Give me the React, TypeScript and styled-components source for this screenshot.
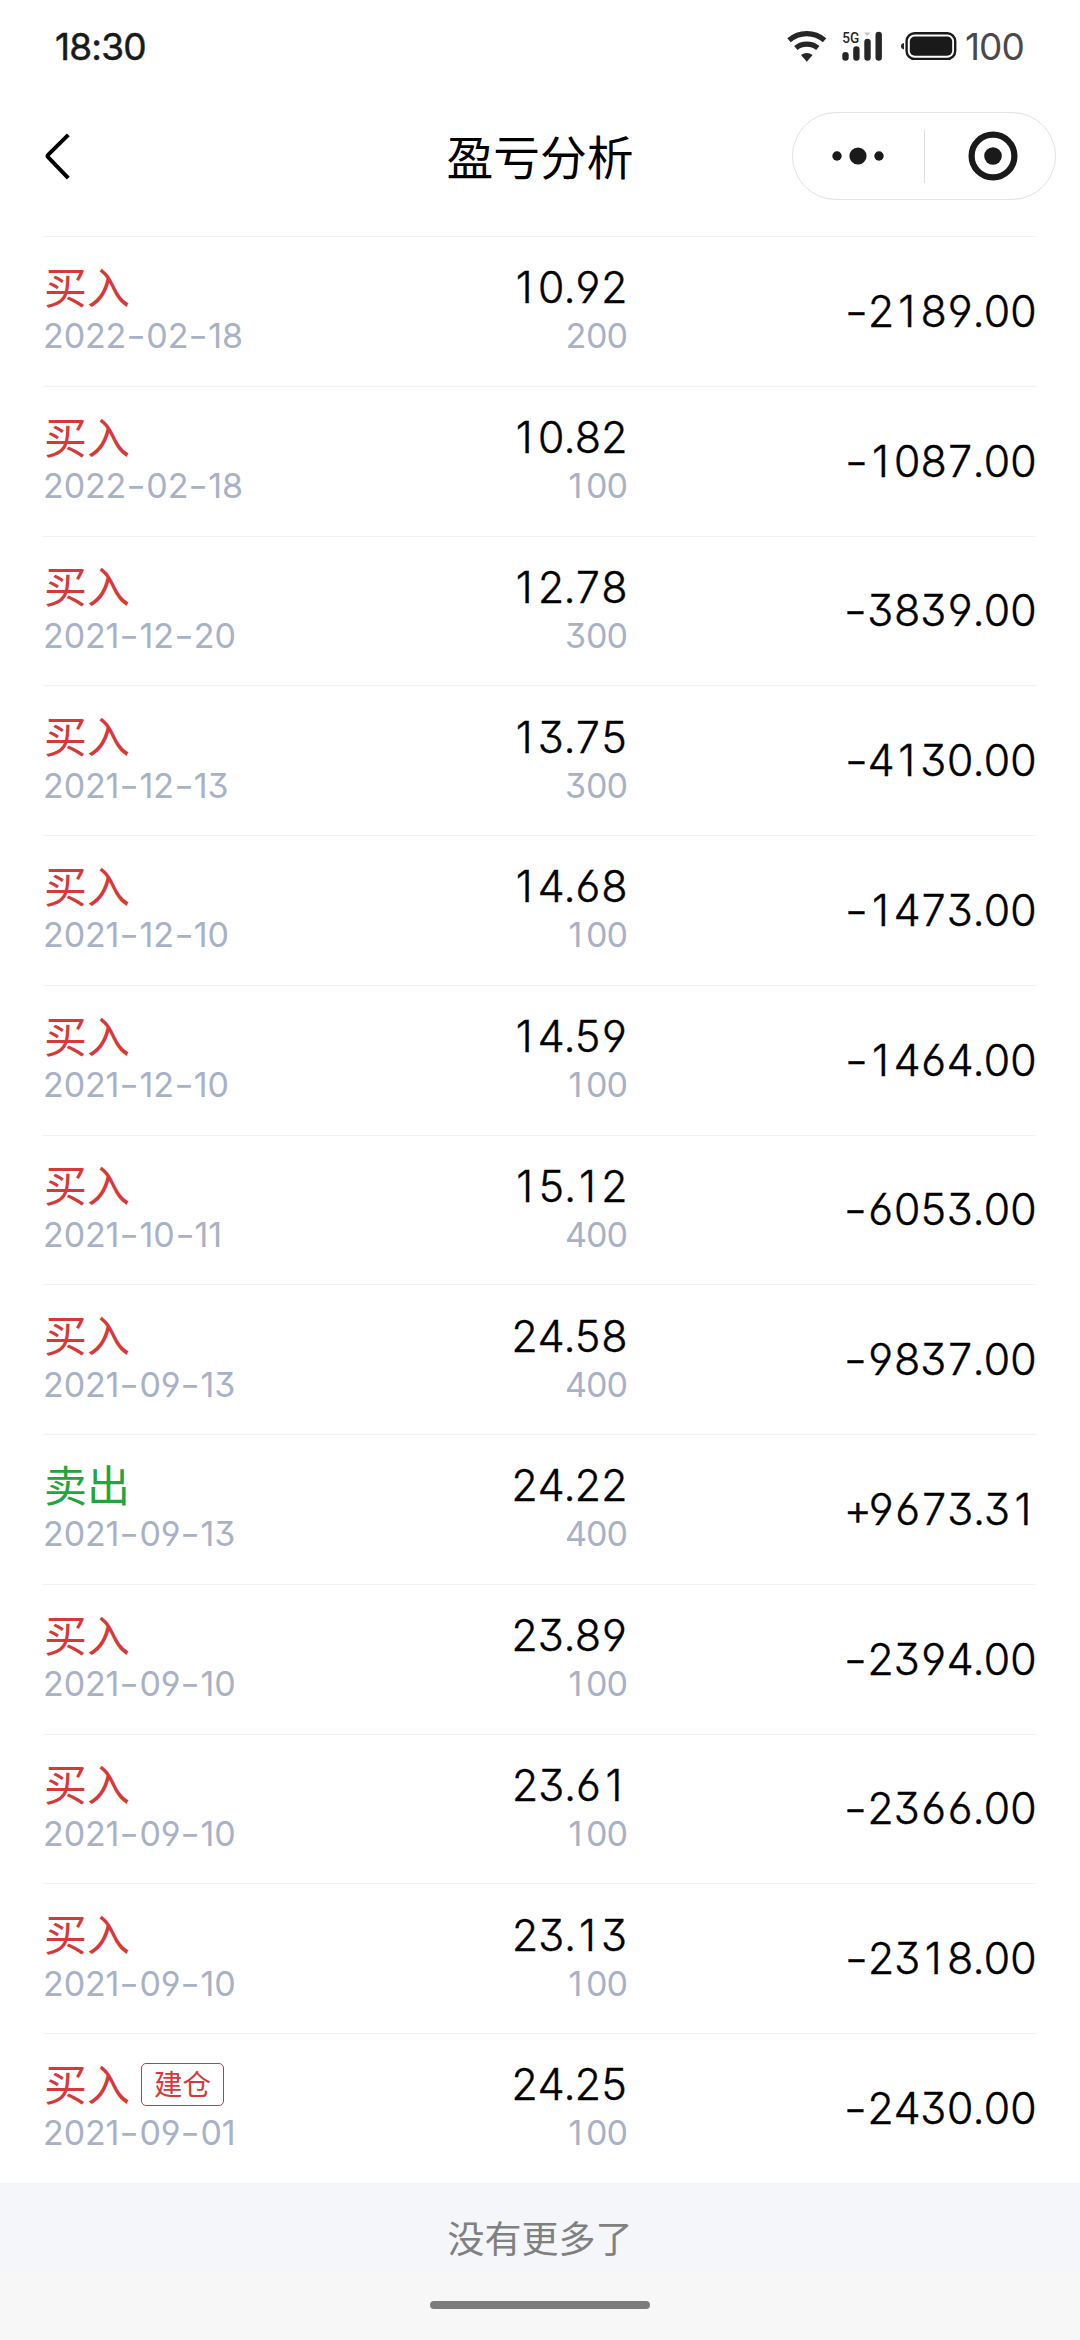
import React from "react";
import styled, { createGlobalStyle } from "styled-components";

const GlobalStyle = createGlobalStyle`
  body {
    margin: 0;
    background: #fff;
  }
`;

const cjk = `"Noto Sans CJK SC", sans-serif`;
const digits = `Inter, "Noto Sans CJK SC", sans-serif`;

const Screen = styled.div`
  width: 1080px;
  height: 2340px;
  display: flex;
  flex-direction: column;
  overflow: hidden;
  background: #fff;
  font-family: ${cjk};
`;

const StatusBar = styled.div`
  height: 94px;
  flex: none;
  box-sizing: border-box;
  padding: 0 56px 0 55px;
  display: flex;
  align-items: center;
  justify-content: space-between;
`;

const Clock = styled.span`
  font: 400 37px/46px ${digits};
  font-feature-settings: "cv04";
  letter-spacing: -0.8px;
  -webkit-text-stroke: 0.5px currentColor;
  color: #1a1a1a;
`;

const Indicators = styled.div`
  display: flex;
  align-items: center;
  gap: 8px;
`;

const BatteryLevel = styled.span`
  font: 400 37px/46px ${digits};
  letter-spacing: -0.9px;
  color: #4a4a4a;
`;

const NavBar = styled.header`
  height: 142px;
  flex: none;
  box-sizing: border-box;
  padding: 18px 24px 36px 44px;
  display: grid;
  grid-template-columns: 1fr auto 1fr;
  align-items: center;
`;

const BackButton = styled.button`
  width: 28px;
  height: 52px;
  padding: 0;
  border: 0;
  background: none;
  display: flex;
`;

const Title = styled.h1`
  margin: 0;
  padding: 0 20px 3px 0;
  font: 400 46.8px/56px ${cjk};
  color: #000;
`;

const Capsule = styled.div`
  justify-self: end;
  width: 264px;
  height: 88px;
  box-sizing: border-box;
  border: 1px solid #e3e3e3;
  border-radius: 44px;
  display: grid;
  grid-template-columns: 1fr 1px 1fr;
  align-items: center;
  justify-items: center;
`;

const CapsuleDivider = styled.div`
  width: 1px;
  height: 53px;
  background: #dedede;
`;

const CapsuleClose = styled.div`
  display: flex;
  padding-left: 6px;
`;

const List = styled.ul`
  margin: 0;
  padding: 0 44px 0 43px;
  list-style: none;
  flex: none;
`;

const Row = styled.li`
  height: 149.75px;
  box-sizing: border-box;
  border-top: 1px solid #f2f2f2;
  display: grid;
  grid-template-columns: 292px 292px 1fr;
  align-items: center;
`;

const Cell = styled.div<{ $end?: boolean }>`
  display: flex;
  flex-direction: column;
  align-items: ${(p) => (p.$end ? "flex-end" : "flex-start")};
  padding-bottom: ${(p) => (p.$end ? "1px" : "0")};
`;

const ActionLine = styled.div`
  height: 49px;
  display: flex;
  align-items: center;
  gap: 11px;
  padding-left: 1px;
`;

const Action = styled.span<{ $sell: boolean }>`
  font: 400 43px/45px ${cjk};
  padding-bottom: 3px;
  color: ${(p) => (p.$sell ? "#23a53c" : "#d63a38")};
`;

const OpenTag = styled.span`
  box-sizing: border-box;
  height: 43px;
  margin-top: 2px;
  padding: 0 12px;
  border: 1px solid #c23c3a;
  border-radius: 5px;
  font: 400 28.5px/38px ${cjk};
  color: #d63a38;
`;

const DateText = styled.span`
  font: 400 34px/49px ${digits};
  font-feature-settings: "cv03", "cv04", "cv09";
  font-kerning: none;
  letter-spacing: -0.1px;
  color: #a8b1c5;
`;

const Price = styled.span`
  font: 300 43px/50px ${digits};
  font-feature-settings: "tnum", "cv03", "cv04", "cv09";
  font-kerning: none;
  letter-spacing: -0.031em;
  -webkit-text-stroke: 0.4px currentColor;
  color: #000;
`;

const Count = styled(Price)`
  font-size: 34px;
  font-weight: 400;
  line-height: 47px;
  letter-spacing: -0.041em;
  -webkit-text-stroke: 0;
  color: #a8b1c5;
`;

const Amount = styled(Price)`
  justify-self: end;
  padding-bottom: 1px;
`;

const NarrowDigit = styled.span`
  display: inline-block;
  width: 0.605em;
  letter-spacing: 0;
  font-feature-settings: normal;
  text-align: center;
`;

const Sign = styled.span<{ $stretch: number; $width: number }>`
  display: inline-block;
  width: ${(p) => p.$width}em;
  letter-spacing: 0;
  font-feature-settings: normal;
  text-align: center;
  transform: scaleX(${(p) => p.$stretch});
`;

const ListEnd = styled.div`
  height: 88px;
  flex: none;
  display: flex;
  justify-content: center;
  background: #f4f6fa;
  font: 400 37px/108px ${cjk};
  color: #808080;
`;

const HomeArea = styled.footer`
  flex: 1;
  display: flex;
  justify-content: center;
  padding-top: 30px;
  background: #f7f7f7;
`;

const HomeIndicator = styled.div`
  width: 220px;
  height: 8px;
  border-radius: 4px;
  background: #7b7c7b;
`;

type Trade = {
  sell?: boolean;
  opening?: boolean;
  date: string;
  price: string;
  count: number;
  amount: string;
};

const trades: Trade[] = [
  { date: "2022-02-18", price: "10.92", count: 200, amount: "-2189.00" },
  { date: "2022-02-18", price: "10.82", count: 100, amount: "-1087.00" },
  { date: "2021-12-20", price: "12.78", count: 300, amount: "-3839.00" },
  { date: "2021-12-13", price: "13.75", count: 300, amount: "-4130.00" },
  { date: "2021-12-10", price: "14.68", count: 100, amount: "-1473.00" },
  { date: "2021-12-10", price: "14.59", count: 100, amount: "-1464.00" },
  { date: "2021-10-11", price: "15.12", count: 400, amount: "-6053.00" },
  { date: "2021-09-13", price: "24.58", count: 400, amount: "-9837.00" },
  { sell: true, date: "2021-09-13", price: "24.22", count: 400, amount: "+9673.31" },
  { date: "2021-09-10", price: "23.89", count: 100, amount: "-2394.00" },
  { date: "2021-09-10", price: "23.61", count: 100, amount: "-2366.00" },
  { date: "2021-09-10", price: "23.13", count: 100, amount: "-2318.00" },
  { opening: true, date: "2021-09-01", price: "24.25", count: 100, amount: "-2430.00" },
];

const Figures = ({ value }: { value: string }) => (
  <>
    {value.split(/([1+-])/).map((part, i) => {
      if (part === "1") return <NarrowDigit key={i}>1</NarrowDigit>;
      if (part === "-") return <Sign key={i} $width={0.53} $stretch={1.2}>-</Sign>;
      if (part === "+") return <Sign key={i} $width={0.55} $stretch={1}>+</Sign>;
      return part;
    })}
  </>
);

const DateFigures = ({ value }: { value: string }) => (
  <>
    {value.split(/(-)/).map((part, i) =>
      part === "-" ? (
        <Sign key={i} $width={0.59} $stretch={1.25}>-</Sign>
      ) : (
        part
      )
    )}
  </>
);

const StatusIcons = () => (
  <svg width="170" height="50" viewBox="786 21.5 170 50" fill="none">
    <g stroke="#262626" strokeWidth="5.2">
      <path d="M788 39.8a27 27 0 0 1 35.6 0" />
      <path d="M794.8 47.6a17.5 17.5 0 0 1 22 0" />
    </g>
    <path d="M800 54.6q5.8-4 11.6 0L805.8 61.2z" fill="#262626" />
    <text x="841.2" y="42.4" fontFamily="Roboto, sans-serif" fontWeight="500" fontSize="15.5" textLength="17" lengthAdjust="spacingAndGlyphs" fill="#262626">5G</text>
    <g stroke="#262626" strokeWidth="6.4" strokeLinecap="round">
      <path d="M844.5 54.6v2.5M855.4 49v8.1M866.5 41.5v15.6M877.7 34.5v22.6" />
    </g>
    <path d="M863 32h6.4l-3.2 3.6z" fill="#c4c4c4" />
    <path d="M903 42.6q-3 .6-3 3.2t3 3.2z" fill="#262626" />
    <rect x="905.6" y="32.8" width="48.6" height="25.6" rx="8" stroke="#1a1a1a" strokeWidth="2.4" />
    <rect x="908.8" y="36" width="42.4" height="19.2" rx="5" fill="#1a1a1a" />
  </svg>
);

const BackIcon = () => (
  <svg width="28" height="52" viewBox="44 130 28 52" fill="none">
    <path d="M68.3 134.8L48.3 154.6q-1.4 1.4 0 2.8L68.3 178.2" stroke="#000" strokeWidth="4" />
  </svg>
);

const MoreIcon = () => (
  <svg width="52" height="20" viewBox="0 0 52 20" fill="#1a1a1a">
    <circle cx="5" cy="10" r="4.7" />
    <circle cx="26" cy="10" r="8.6" />
    <circle cx="47" cy="10" r="4.7" />
  </svg>
);

const CloseIcon = () => (
  <svg width="50" height="50" viewBox="0 0 50 50">
    <circle cx="25" cy="25" r="21.4" fill="none" stroke="#1a1a1a" strokeWidth="6.2" />
    <circle cx="25" cy="25" r="8.8" fill="#1a1a1a" />
  </svg>
);

export default function App() {
  return (
    <Screen>
      <GlobalStyle />
      <StatusBar>
        <Clock>18:30</Clock>
        <Indicators>
          <StatusIcons />
          <BatteryLevel>100</BatteryLevel>
        </Indicators>
      </StatusBar>
      <NavBar>
        <BackButton aria-label="返回">
          <BackIcon />
        </BackButton>
        <Title>盈亏分析</Title>
        <Capsule>
          <MoreIcon />
          <CapsuleDivider />
          <CapsuleClose>
            <CloseIcon />
          </CapsuleClose>
        </Capsule>
      </NavBar>
      <List>
        {trades.map((t, i) => (
          <Row key={i}>
            <Cell>
              <ActionLine>
                <Action $sell={!!t.sell}>{t.sell ? "卖出" : "买入"}</Action>
                {t.opening && <OpenTag>建仓</OpenTag>}
              </ActionLine>
              <DateText>
                <DateFigures value={t.date} />
              </DateText>
            </Cell>
            <Cell $end>
              <Price>
                <Figures value={t.price} />
              </Price>
              <Count>
                <Figures value={String(t.count)} />
              </Count>
            </Cell>
            <Amount>
              <Figures value={t.amount} />
            </Amount>
          </Row>
        ))}
      </List>
      <ListEnd>没有更多了</ListEnd>
      <HomeArea>
        <HomeIndicator />
      </HomeArea>
    </Screen>
  );
}
